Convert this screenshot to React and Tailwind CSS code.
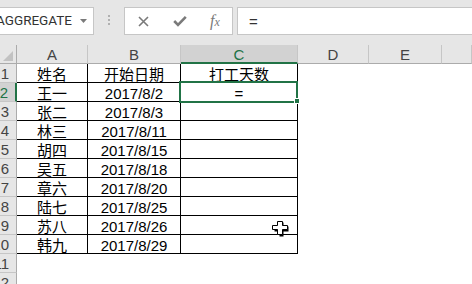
import React from "react";

const rows = [
  ["姓名", "开始日期", "打工天数"],
  ["王一", "2017/8/2", "="],
  ["张二", "2017/8/3", ""],
  ["林三", "2017/8/11", ""],
  ["胡四", "2017/8/15", ""],
  ["吴五", "2017/8/18", ""],
  ["章六", "2017/8/20", ""],
  ["陆七", "2017/8/25", ""],
  ["苏八", "2017/8/26", ""],
  ["韩九", "2017/8/29", ""],
  null,
  null,
];

const font = { fontFamily: '"Liberation Sans", "Noto Sans CJK SC", sans-serif' };

function Toolbar() {
  return (
    <div className="h-[45px] bg-[#e6e6e6] flex items-start pt-[7px] overflow-hidden">
      <div className="-ml-px w-[95px] h-[28px] shrink-0 bg-white border border-[#c6c6c6] flex items-center justify-end overflow-hidden">
        <span className="whitespace-nowrap text-[13.5px] text-[#333] leading-none" style={{ fontFamily: 'Roboto, "Liberation Sans", sans-serif' }}>
          AGGREGATE
        </span>
        <svg width="7" height="4" viewBox="0 0 7 4" className="ml-[8px] mr-[6px] shrink-0">
          <polygon points="0,0 7,0 3.5,4" fill="#7a7a7a" />
        </svg>
      </div>
      <div className="ml-[14px] mt-[8px] flex flex-col gap-[2px] shrink-0">
        <div className="w-[2px] h-[2px] bg-[#b0b0b0]" />
        <div className="w-[2px] h-[2px] bg-[#b0b0b0]" />
        <div className="w-[2px] h-[2px] bg-[#b0b0b0]" />
      </div>
      <div className="ml-[14px] w-[109px] h-[28px] shrink-0 bg-white border border-[#c6c6c6] flex items-center">
        <div className="w-[36px] flex justify-center">
          <svg width="11" height="11" viewBox="0 0 11 11">
            <path d="M1 1 L10 10 M10 1 L1 10" stroke="#7a7a7a" strokeWidth="1.6" />
          </svg>
        </div>
        <div className="w-[37px] flex justify-center">
          <svg width="14" height="12" viewBox="0 0 14 12">
            <path d="M1.2 6 L5 9.8 L12.8 1.8" stroke="#7a7a7a" strokeWidth="2.6" fill="none" />
          </svg>
        </div>
        <div className="w-[34px] flex justify-center">
          <span className="italic text-[16px] text-[#7a7a7a] leading-none" style={{ fontFamily: '"Liberation Serif", serif' }}>
            f<span className="text-[12px]">x</span>
          </span>
        </div>
      </div>
      <div className="ml-[4px] flex-1 -mr-[10px] h-[28px] bg-white border border-[#c6c6c6] flex items-center pl-[11px]">
        <span className="text-[15px] text-[#333] leading-none" style={font}>=</span>
      </div>
    </div>
  );
}

const colW = ["w-[17px]", "w-[71px]", "w-[93px]", "w-[117px]", "w-[71px]", "w-[73px]"];

function HeaderRow() {
  const letters = ["A", "B", "C", "D", "E", ""];
  return (
    <div className="flex h-[19px] bg-[#e6e6e6]">
      <div className="w-[17px] shrink-0 border-r border-b border-[#ababab] flex items-end justify-end pb-[2px] pr-[3px]">
        <svg width="10" height="10" viewBox="0 0 10 10">
          <polygon points="10,0 10,10 0,10" fill="#c2c2c2" />
        </svg>
      </div>
      {letters.map((l, i) => {
        const sel = l === "C";
        const w = i < 5 ? colW[i + 1] : "flex-1";
        return (
          <div
            key={i}
            className={`${w} shrink-0 flex items-center justify-center text-[15px] leading-none pt-[1px] border-r border-[#c6c6c6] ${
              sel ? "bg-[#d2d2d2] text-[#217346] border-b-2 border-b-[#217346]" : "text-[#444] border-b border-b-[#ababab]"
            }`}
            style={font}
          >
            {l}
          </div>
        );
      })}
    </div>
  );
}

function BodyRow({ idx, data }) {
  const sel = idx === 2;
  const inTable = !!data;
  return (
    <div className="flex h-[19px]">
      <div
        className={`w-[17px] shrink-0 flex items-center justify-end pr-[7px] text-[15px] leading-none border-b border-b-[#c6c6c6] overflow-hidden ${
          sel ? "bg-[#d2d2d2] text-[#217346] border-r-2 border-r-[#217346]" : "bg-[#e6e6e6] text-[#444] border-r border-r-[#ababab]"
        }`}
        style={font}
      >
        <span className="whitespace-nowrap pt-[1px]">{idx}</span>
      </div>
      {[0, 1, 2].map((c) => (
        <div
          key={c}
          className={`${colW[c + 1]} shrink-0 flex items-center justify-center text-[15px] leading-none text-black pt-[2px] whitespace-nowrap ${
            inTable ? "border-r border-b border-black" : "border-r border-transparent"
          }`}
          style={font}
        >
          {data ? data[c] : ""}
        </div>
      ))}
      <div className="flex-1 bg-white" />
    </div>
  );
}

function Cursor() {
  return (
    <svg width="18" height="17" viewBox="0 0 18 17" className="absolute left-[272px] top-[220px]">
      <polygon points="6.5,1.5 10.5,1.5 10.5,5.5 15.5,5.5 15.5,10.5 10.5,10.5 10.5,15.5 6.5,15.5 6.5,10.5 1.5,10.5 1.5,5.5 6.5,5.5" fill="#000" transform="translate(1,1)" />
      <polygon points="5.5,1.5 10.5,1.5 10.5,5.5 15.5,5.5 15.5,9.5 10.5,9.5 10.5,14.5 5.5,14.5 5.5,9.5 0.5,9.5 0.5,5.5 5.5,5.5" fill="#fff" stroke="#000" strokeWidth="1" />
    </svg>
  );
}

export default function App() {
  return (
    <div className="relative w-[472px] h-[284px] overflow-hidden bg-white" style={font}>
      <Toolbar />
      <HeaderRow />
      {rows.map((r, i) => (
        <BodyRow key={i} idx={i + 1} data={r} />
      ))}
      <div className="absolute left-[179px] top-[81px] w-[119px] h-[22px] border-2 border-[#217346]" />
      <div className="absolute left-[294px] top-[98px] w-[6px] h-[6px] bg-[#217346] border border-white" />
      <Cursor />
    </div>
  );
}
